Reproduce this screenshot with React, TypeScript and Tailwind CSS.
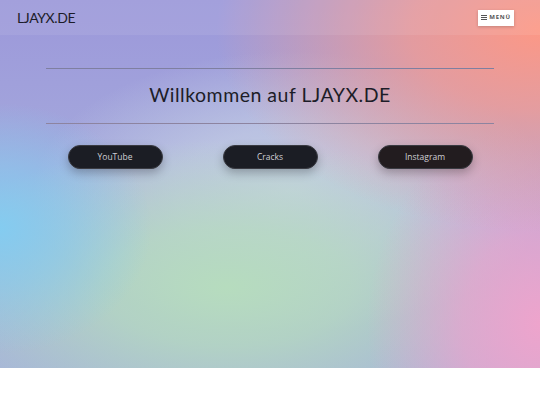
import React from "react";

const heroBg =
  "bg-[radial-gradient(ellipse_60%_55%_at_100%_8%,#fc9886_0%,rgba(250,155,140,0.75)_40%,rgba(250,155,140,0)_100%),radial-gradient(ellipse_32%_55%_at_100%_88%,#eea4cc_0%,rgba(238,164,204,0.7)_45%,rgba(238,164,204,0)_100%),radial-gradient(ellipse_28%_34%_at_0%_62%,#84ccf0_0%,rgba(132,204,240,0.6)_45%,rgba(132,204,240,0)_100%),radial-gradient(ellipse_58%_40%_at_42%_78%,#b6dcbe_0%,rgba(182,220,190,0.75)_40%,rgba(182,220,190,0)_100%),radial-gradient(ellipse_48%_38%_at_54%_52%,#c4cee4_0%,rgba(196,206,228,0.7)_45%,rgba(196,206,228,0)_100%),linear-gradient(180deg,#9c98da_0%,#a4a8dc_45%,#a6b4da_100%)]";

function Pill({ label, warm }: { label: string; warm?: boolean }) {
  return (
    <a
      href="#"
      className={
        "flex h-[24px] w-[95px] items-center justify-center rounded-full border border-[#3a3b42] text-[8.5px] text-[#cfcfd4] shadow-[0_4px_10px_rgba(0,0,0,0.25)] " +
        (warm ? "bg-[#221c1f]" : "bg-[#1b1d24]")
      }
      style={{ fontFamily: '"Open Sans", "Liberation Sans", sans-serif' }}
    >
      {label}
    </a>
  );
}

export default function App() {
  return (
    <div className="w-[540px] min-h-[405px] bg-white">
      <section className={"h-[368px] w-full " + heroBg}>
        <header className="flex h-[35px] items-center justify-between bg-[rgba(255,255,255,0.08)] pl-[17px] pr-[26px]">
          <span
            className="text-[14px] leading-none tracking-[-0.4px] text-[#1c1c28]"
            style={{ fontFamily: '"Lato", "Noto Sans", sans-serif' }}
          >
            LJAYX.DE
          </span>
          <button
            className="flex h-[16px] w-[36px] items-center justify-center gap-[2px] bg-white text-[6px] font-bold tracking-[0.8px] text-[#555] shadow-[0_1px_3px_rgba(0,0,0,0.2)]"
            style={{ fontFamily: '"Open Sans", "Liberation Sans", sans-serif' }}
          >
            <svg width="6" height="5" viewBox="0 0 6 5">
              <rect x="0" y="0" width="6" height="1" fill="#555" />
              <rect x="0" y="2" width="6" height="1" fill="#555" />
              <rect x="0" y="4" width="6" height="1" fill="#555" />
            </svg>
            MENÜ
          </button>
        </header>
        <div className="mx-[46px] mt-[33px] border-t border-[#7f7fa0]" />
        <h1
          className="flex h-[54px] items-center justify-center pb-[2px] text-[19.5px] tracking-[0.5px] text-[#1d1d28]"
          style={{ fontFamily: '"Lato", "Noto Sans", sans-serif' }}
        >
          Willkommen auf LJAYX.DE
        </h1>
        <div className="mx-[46px] border-t border-[#8d84a0]" />
        <div className="mt-[21px] flex justify-center gap-[60px]">
          <Pill label="YouTube" />
          <Pill label="Cracks" />
          <Pill label="Instagram" warm />
        </div>
      </section>
    </div>
  );
}
